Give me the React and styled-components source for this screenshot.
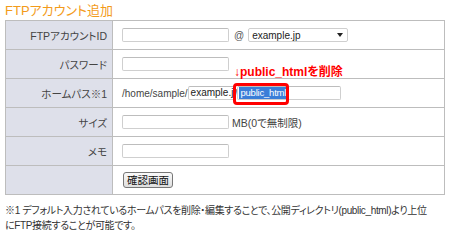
import React from "react";
import styled, { createGlobalStyle } from "styled-components";

const Global = createGlobalStyle`
  html, body { margin: 0; padding: 0; background: #fff; }
  body {
    font-family: "Liberation Sans", "Noto Sans CJK JP", sans-serif;
    font-feature-settings: "palt";
    color: #333;
  }
`;

const Page = styled.div`
  width: 450px;
  height: 240px;
  padding: 2px 5px 0 5px;
  box-sizing: border-box;
  position: relative;
  overflow: hidden;
`;

const Title = styled.h1`
  margin: 0;
  font-size: 13px;
  line-height: 18px;
  font-weight: normal;
  color: #f39b1a;
`;

const Table = styled.div`
  width: 440px;
  box-sizing: border-box;
  border: 1px solid #bdbdbd;
  border-bottom: none;
  position: relative;
`;

const Row = styled.div`
  display: grid;
  grid-template-columns: 107px 1fr;
  height: 29px;
  box-sizing: border-box;
  border-bottom: 1px solid #bdbdbd;
`;

const Label = styled.div`
  background: #dee0ea;
  border-right: 1px solid #bdbdbd;
  display: flex;
  align-items: center;
  justify-content: flex-end;
  padding-right: 5px;
  font-size: 10.5px;
  color: #444;
`;

const Value = styled.div`
  display: flex;
  align-items: center;
  padding-left: 9px;
  font-size: 10px;
  color: #444;
`;

const Input = styled.div`
  width: ${(p) => p.$w || 106}px;
  flex: none;
  height: 14px;
  box-sizing: border-box;
  border: 1px solid #cfcfcf;
  border-top-color: #bdbdbd;
  border-radius: 2px;
  background: #fff;
  font-size: 10px;
  line-height: 12px;
  color: #222;
  display: flex;
  align-items: center;
  padding-left: ${(p) => (p.$pl !== undefined ? p.$pl : 2)}px;
  overflow: hidden;
  white-space: nowrap;
`;

const Selected = styled.span`
  background: #3a7ed8;
  color: #fff;
  padding: 0 1px;
  font-size: 9.5px;
  letter-spacing: -0.2px;
  line-height: 12px;
`;

const At = styled.span`
  margin: 0 4px 0 5px;
  font-size: 10px;
  color: #555;
`;

const Select = styled.div`
  width: 100px;
  height: 14px;
  box-sizing: border-box;
  border: 1px solid #cfcfcf;
  border-radius: 2px;
  display: flex;
  align-items: center;
  justify-content: space-between;
  padding: 0 4px 0 3px;
  font-size: 10px;
  color: #222;
`;

const Arrow = styled.span`
  width: 0;
  height: 0;
  border-left: 3px solid transparent;
  border-right: 3px solid transparent;
  border-top: 4px solid #222;
`;

const Text = styled.span`
  margin-left: ${(p) => p.$ml || 0}px;
  white-space: nowrap;
  font-size: ${(p) => p.$fs || 10}px;
`;

const Button = styled.div`
  margin-left: 1px;
  height: 16px;
  padding: 0 3px;
  box-sizing: border-box;
  border: 1px solid #777;
  border-radius: 3px;
  background: linear-gradient(#fafafa, #dedede);
  font-size: 10.5px;
  line-height: 14px;
  color: #111;
`;

const Note = styled.p`
  margin: 8px 0 0;
  font-size: 10px;
  letter-spacing: -0.35px;
  line-height: 15px;
  color: #333;
  white-space: nowrap;
`;

const Annotation = styled.div`
  position: absolute;
  left: 228px;
  top: 41px;
  font-size: 12px;
  font-weight: bold;
  color: #ff0000;
  white-space: nowrap;
`;

const Highlight = styled.div`
  position: absolute;
  left: 227px;
  top: 62px;
  width: 56px;
  height: 22px;
  box-sizing: border-box;
  border: 3px solid #f00;
  border-radius: 4px;
`;

export default function App() {
  return (
    <>
      <Global />
      <Page>
        <Title>FTPアカウント追加</Title>
        <Table>
          <Row>
            <Label>FTPアカウントID</Label>
            <Value>
              <Input $w={107} />
              <At>@</At>
              <Select>
                <span>example.jp</span>
                <Arrow />
              </Select>
            </Value>
          </Row>
          <Row>
            <Label>パスワード</Label>
            <Value>
              <Input $w={107} />
            </Value>
          </Row>
          <Row>
            <Label>ホームパス※1</Label>
            <Value>
              <Text>/home/sample/</Text>
              <Input $w={47}>example.jp</Input>
              <Text>/</Text>
              <Input $w={104} $pl={1}>
                <Selected>public_html</Selected>
              </Input>
            </Value>
          </Row>
          <Row>
            <Label>サイズ</Label>
            <Value>
              <Input $w={107} />
              <Text $ml={3} $fs={10.5}>MB(0で無制限)</Text>
            </Value>
          </Row>
          <Row>
            <Label>メモ</Label>
            <Value>
              <Input $w={107} />
            </Value>
          </Row>
          <Row>
            <Label />
            <Value>
              <Button>確認画面</Button>
            </Value>
          </Row>
          <Annotation>↓public_htmlを削除</Annotation>
          <Highlight />
        </Table>
        <Note>
          ※1 デフォルト入力されているホームパスを削除・編集することで、公開ディレクトリ(public_html)より上位
          <br />
          にFTP接続することが可能です。
        </Note>
      </Page>
    </>
  );
}
